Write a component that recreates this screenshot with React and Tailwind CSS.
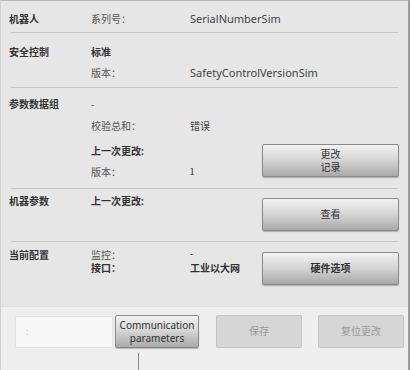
const font = { fontFamily: '"Noto Sans", "Noto Sans CJK SC", sans-serif' };

function Btn({ children, className = "" }) {
    return (
        <div
            className={`flex flex-col items-center justify-center shrink-0 border border-[#8a8a8a] rounded-[2px] bg-gradient-to-b from-[#f2f2f2] via-[#d4d4d4] to-[#a9a9a9] text-[10px] leading-[13px] text-[#333] shadow-[0_1px_1px_rgba(0,0,0,0.25)] ${className}`}
        >
            {children}
        </div>
    );
}

function DisabledBtn({ children, className = "" }) {
    return (
        <div className={`flex items-center justify-center shrink-0 border border-[#c4c4c4] rounded-[2px] bg-[#d6d6d6] text-[10px] text-[#9a9a9a] ${className}`}>
            {children}
        </div>
    );
}

function Divider() {
    return <div className="mx-[10px] h-[2px] border-t border-[#c6c6c6]" />;
}

function Row({ title, label, value, h, bold, valueClass = "text-[11px]" }) {
    return (
        <div className={`grid grid-cols-[82px_99px_1fr] items-center leading-[14px] ${h}`}>
            <div className="text-[10px] font-bold text-[#333]">{title}</div>
            <div className={`text-[10px] ${bold ? "font-bold text-[#333]" : "text-[#555]"}`}>{label}</div>
            <div className={`text-[#444] ${valueClass}`}>{value}</div>
        </div>
    );
}

export default function App() {
    return (
        <div className="w-[411px] h-[370px] overflow-hidden bg-white" style={font}>
            <div className="w-[410px] h-[370px] bg-[#e6e6e6] border-t border-t-[#b5b5b5] border-r-2 border-r-[#9a9a9a] border-l border-l-[#d0d0d0] flex flex-col">
                {/* 机器人 */}
                <div className="pl-[8px] pt-[7px] pb-[3px]">
                    <Row title="机器人" label="系列号：" value="SerialNumberSim" h="h-[21px]" />
                </div>
                <Divider />

                {/* 安全控制 */}
                <div className="pl-[8px] pt-[8px] pb-[4px]">
                    <Row title="安全控制" label="标准" h="h-[21px]" bold />
                    <Row label="版本：" value="SafetyControlVersionSim" h="h-[21px]" />
                </div>
                <Divider />

                {/* 参数数据组 */}
                <div className="pl-[8px] pt-[5px] pb-[8px]">
                    <Row title="参数数据组" label="-" h="h-[22px]" />
                    <Row label="校验总和：" value="错误" h="h-[22px]" valueClass="text-[10px]" />
                    <div className="flex items-center">
                        <div className="flex-1">
                            <Row label="上一次更改:" h="h-[27px]" bold />
                            <Row label="版本：" value="1" h="h-[16px]" valueClass="text-[11px] font-serif" />
                        </div>
                        <Btn className="w-[137px] h-[33px] mr-[9px] mt-[4px]">
                            <span>更改</span>
                            <span>记录</span>
                        </Btn>
                    </div>
                </div>
                <Divider />

                {/* 机器参数 */}
                <div className="pl-[8px] pt-[5px] pb-[10px] flex items-start">
                    <div className="flex-1">
                        <Row title="机器参数" label="上一次更改:" h="h-[14px]" bold />
                    </div>
                    <Btn className="w-[137px] h-[33px] mr-[9px] mt-[4px]">查看</Btn>
                </div>
                <Divider />

                {/* 当前配置 */}
                <div className="pl-[8px] pt-[5px] pb-[21px] flex items-start">
                    <div className="flex-1 pt-[1px] leading-[12px]">
                        <div className="grid grid-cols-[82px_99px_1fr] items-center h-[13px]">
                            <div className="text-[10px] font-bold text-[#333]">当前配置</div>
                            <div className="text-[10px] text-[#555]">监控：</div>
                            <div className="text-[10px] text-[#444] -mt-[3px]">-</div>
                        </div>
                        <div className="grid grid-cols-[82px_99px_1fr] items-center h-[13px]">
                            <div />
                            <div className="text-[10px] font-bold text-[#333]">接口：</div>
                            <div className="text-[10px] font-bold text-[#333]">工业以大网</div>
                        </div>
                    </div>
                    <Btn className="w-[137px] h-[33px] mr-[9px] mt-[5px] font-bold">硬件选项</Btn>
                </div>

                {/* bottom bar */}
                <div className="flex-1 bg-[#eeeeee] border-t border-[#dcdcdc] flex flex-col">
                    <div className="flex items-center pt-[8px] pl-[14px]">
                        <div className="w-[98px] h-[32px] shrink-0 bg-[#f7f7f7] border border-[#e4e4e4] flex items-center pl-[10px] text-[8px] text-[#aaa]">
                            :
                        </div>
                        <Btn className="w-[84px] h-[33px] ml-[2px] text-[10px] leading-[12px]">
                            <span>Communication</span>
                            <span>parameters</span>
                        </Btn>
                        <DisabledBtn className="w-[86px] h-[33px] ml-[17px]">保存</DisabledBtn>
                        <DisabledBtn className="w-[86px] h-[33px] ml-[16px]">复位更改</DisabledBtn>
                    </div>
                    <div className="ml-[137px] mt-[5px] w-[1px] h-[20px] bg-[#888]" />
                </div>
            </div>
        </div>
    );
}
